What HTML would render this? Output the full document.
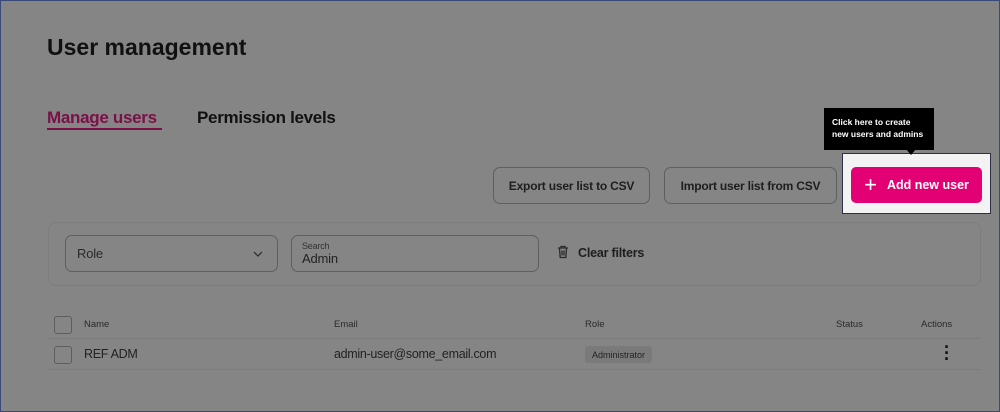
<!DOCTYPE html><html><head><style>
body{margin:0;width:1000px;height:412px;overflow:hidden;font-family:"Liberation Sans",sans-serif;}
.pg{position:absolute;left:0;top:0;width:998px;height:410px;border:1px solid #3a4a78;background:#858585;}
.a{position:absolute;}
.btn{position:absolute;border:1px solid #5f5f5f;border-radius:7px;font-size:12px;letter-spacing:-0.2px;font-weight:bold;color:#1e1e1e;display:flex;align-items:center;justify-content:center;box-sizing:border-box;}
.cb{position:absolute;width:16px;height:16px;border:1px solid #5d5d5d;border-radius:3px;}
.h{position:absolute;font-size:9.5px;color:#2a2a2a;}
</style></head><body><div class="pg">
<div class="a" style="left:46px;top:33px;font-size:23px;font-weight:bold;color:#111">User management</div>
<div class="a" style="left:46px;top:107px;font-size:17px;letter-spacing:-0.3px;font-weight:bold;color:#7a1047">Manage users</div>
<div class="a" style="left:46px;top:127px;width:115px;height:2px;background:#7a1047"></div>
<div class="a" style="left:196px;top:107px;font-size:17px;letter-spacing:-0.3px;font-weight:bold;color:#111">Permission levels</div>
<div class="btn" style="left:492px;top:166px;width:157px;height:37px">Export user list to CSV</div>
<div class="btn" style="left:663px;top:166px;width:173px;height:37px">Import user list from CSV</div>
<div class="a" style="left:841px;top:152px;width:147px;height:59px;background:#f3f3f3;border:1px solid #2b3048"></div>
<div class="a" style="left:850px;top:166px;width:131px;height:36px;background:#e20074;border-radius:5px;color:#fff;font-size:12.5px;font-weight:bold;display:flex;align-items:center;justify-content:center"><span style="font-size:22px;font-weight:normal;margin-right:10px;line-height:1">+</span>Add new user</div>
<div class="a" style="left:823px;top:107px;width:110px;height:42px;background:#000;color:#fff;font-size:8.5px;font-weight:bold;box-sizing:border-box;padding:8px 0 0 8px;line-height:12px">Click here to create<br>new users and admins</div>
<div class="a" style="left:905px;top:148px;border-left:5px solid transparent;border-right:5px solid transparent;border-top:6px solid #000"></div>
<div class="a" style="left:47px;top:221px;width:933px;height:64px;border:1px solid #7d7d7d;border-radius:8px;box-sizing:border-box"></div>
<div class="btn" style="left:64px;top:234px;width:213px;height:37px;font-weight:normal;justify-content:space-between;padding:0 14px 0 11px;color:#2a2a2a;font-size:13px"><span>Role</span><svg width="10" height="6" viewBox="0 0 10 6"><path d="M1 1l4 4 4-4" fill="none" stroke="#2a2a2a" stroke-width="1.2"/></svg></div>
<div class="btn" style="left:290px;top:234px;width:248px;height:37px;display:block;padding:5px 10px;font-weight:normal"><div style="font-size:9px;color:#333">Search</div><div style="font-size:13px;color:#222">Admin</div></div>
<svg class="a" style="left:556px;top:244px" width="12" height="14" viewBox="0 0 12 14"><path d="M1 3h10M4 3V1.5h4V3M2.5 3.5l.7 9h5.6l.7-9M5 5.5v5M7 5.5v5" fill="none" stroke="#2a2a2a" stroke-width="1.3"/></svg>
<div class="a" style="left:577px;top:245px;font-size:12.5px;letter-spacing:-0.2px;font-weight:bold;color:#1e1e1e">Clear filters</div>
<div class="cb" style="left:53px;top:315px"></div>
<div class="h" style="left:83px;top:318px">Name</div>
<div class="h" style="left:333px;top:318px">Email</div>
<div class="h" style="left:584px;top:318px">Role</div>
<div class="h" style="left:835px;top:318px">Status</div>
<div class="h" style="left:920px;top:318px">Actions</div>
<div class="a" style="left:47px;top:337px;width:933px;height:1px;background:#7d7d7d"></div>
<div class="cb" style="left:53px;top:345px"></div>
<div class="a" style="left:83px;top:346px;font-size:12.5px;letter-spacing:-0.3px;color:#222">REF ADM</div>
<div class="a" style="left:333px;top:346px;font-size:12.5px;letter-spacing:-0.3px;color:#222">admin-user@some_email.com</div>
<div class="a" style="left:584px;top:345px;width:67px;height:17px;background:#7a7a7a;border-radius:3px;font-size:9px;color:#222;display:flex;align-items:center;justify-content:center">Administrator</div>
<div class="a" style="left:939px;top:343px;font-size:18px;font-weight:bold;color:#111;line-height:6px;width:14px;text-align:center">·<br>·<br>·</div>
<div class="a" style="left:47px;top:368px;width:933px;height:1px;background:#7d7d7d"></div>
</div></body></html>
